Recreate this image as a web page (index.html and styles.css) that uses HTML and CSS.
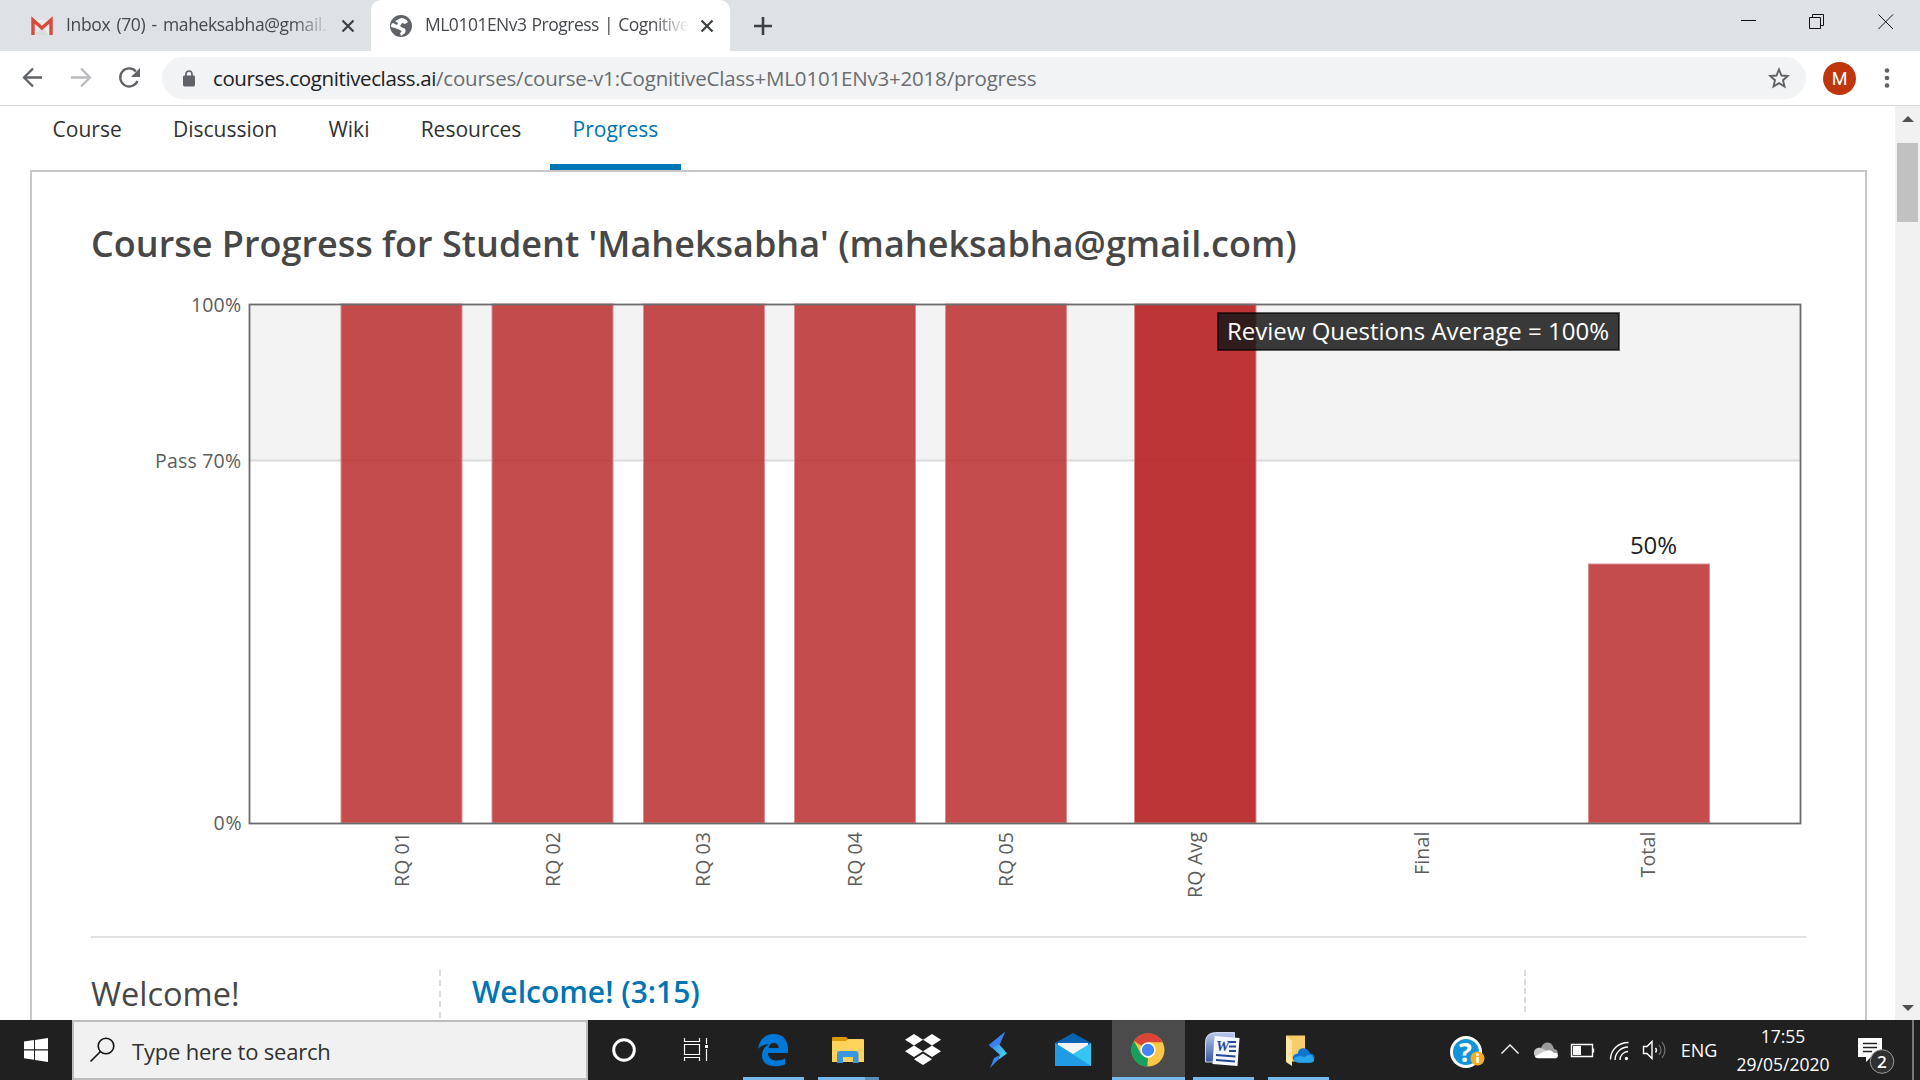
FILE: index.html
```html
<!DOCTYPE html>
<html lang="en">
<head>
<meta charset="utf-8">
<title>ML0101ENv3 Progress | Cognitive Class</title>
<link rel="stylesheet" href="styles.css">
</head>
<body>
<div class="screen">
  <header class="tabstrip">
    <div class="tab tab-first">
      <svg class="favicon" viewBox="30 14 24 22"><path d="M33 19h18v15H33z" fill="#ececec"/><path d="M35 34l7-8 7 8z" fill="#dcdcdc"/><path d="M33 34V19l9 8 9-8v15" fill="none" stroke="#d84a3c" stroke-width="3.4"/></svg>
      <span class="tab-title title-inbox">Inbox (70) - maheksabha@gmail.</span>
      <svg class="tab-close" viewBox="0 0 14 14"><path d="M1.5 1.5l11 11M12.5 1.5l-11 11"/></svg>
    </div>
    <div class="tab tab-active">
      <svg class="favicon" viewBox="389 14 24 22"><circle cx="401" cy="25" r="11" fill="#5f6368"/><path d="M401 17c3 0 5 1 7 4l-3 2-3-1-2 3 3 2c3 0 3 3 2 5l-4 3-1-3c2-1 2-2 0-3l-5-2-4-1c0-3 1-4 2-4l4 2 1-2-3-2z" fill="#fff"/></svg>
      <span class="tab-title title-progress">ML0101ENv3 Progress | Cognitive</span>
      <svg class="tab-close" viewBox="0 0 14 14"><path d="M1.5 1.5l11 11M12.5 1.5l-11 11"/></svg>
    </div>
    <svg class="new-tab" viewBox="0 0 20 20"><path d="M10 1v18M1 10h18"/></svg>
    <svg class="window-controls" viewBox="1720 0 200 51"><path d="M1741 20.5h15M1809.5 17.5h11v11h-11zM1812.500 17.500v-3h11v11h-3M1878.500 14.500l14.500 14.500M1893 14.500l-14.500 14.500"/></svg>
  </header>

  <div class="toolbar">
    <svg class="nav-buttons" viewBox="0 51 162 54">
      <path d="M42 77.500H24.500M33 68.500l-9 9 9 9" stroke="#5f6368"/>
      <path d="M71 77.500h17.500M81 68.500l9 9-9 9" stroke="#b9bbbe"/>
      <path d="M137.500 81a9 9 0 1 1-1.600-9.600" stroke="#5f6368"/><path d="M140 68v9h-9z" fill="#5f6368"/>
    </svg>
    <div class="omnibox">
      <svg class="lock" viewBox="0 0 12 17"><rect y="5.500" width="12" height="11" rx="1.400" fill="#5f6368"/><path d="M3 6V4a3 3 0 0 1 6 0v2" fill="none" stroke="#5f6368" stroke-width="1.700"/></svg>
      <span class="url"><span class="host">courses.cognitiveclass.ai</span>/courses/course-v1:CognitiveClass+ML0101ENv3+2018/progress</span>
      <svg class="star" viewBox="0 0 22 22"><path d="M11 2.500l2.500 6 6.300.5-4.800 4.200 1.500 6.300-5.500-3.400-5.500 3.400L7 13.200 2.200 9l6.300-.5z"/></svg>
    </div>
    <div class="avatar">M</div>
    <svg class="menu" viewBox="0 0 6 20"><circle cx="3" cy="2.500" r="2.300"/><circle cx="3" cy="10" r="2.300"/><circle cx="3" cy="17.500" r="2.300"/></svg>
  </div>

  <div class="viewport">
    <main class="page">
      <nav class="course-nav">
        <a>Course</a><a>Discussion</a><a>Wiki</a><a>Resources</a><a class="current">Progress</a>
      </nav>
      <section class="panel">
        <h1>Course Progress for Student 'Maheksabha' (maheksabha@gmail.com)</h1>
        <svg class="chart" viewBox="91 280 1716 656">
          <rect x="250" y="304" width="1550" height="156" fill="#f3f3f3"/>
          <path d="M250 460.500h1550" stroke="#dadada" stroke-width="2"/>
          <g class="bars">
            <rect x="341" y="304" width="121" height="519"/>
            <rect x="492" y="304" width="121" height="519"/>
            <rect x="643.500" y="304" width="121" height="519"/>
            <rect x="794.500" y="304" width="121" height="519"/>
            <rect x="945.500" y="304" width="121" height="519"/>
            <rect class="hovered" x="1134.500" y="304" width="121.500" height="519"/>
            <rect x="1588.500" y="564" width="121" height="259"/>
          </g>
          <rect x="249.500" y="304.500" width="1551" height="519" fill="none" stroke="#6b6b6b" stroke-width="1.800"/>
          <g class="ticks">
            <text x="191" y="312" textLength="50">100%</text>
            <text x="155" y="468" textLength="86">Pass 70%</text>
            <text x="213.500" y="830" textLength="28">0%</text>
            <text transform="translate(409 887) rotate(-90)" textLength="55">RQ 01</text>
            <text transform="translate(560 887) rotate(-90)" textLength="55">RQ 02</text>
            <text transform="translate(710 887) rotate(-90)" textLength="55">RQ 03</text>
            <text transform="translate(862 887) rotate(-90)" textLength="55">RQ 04</text>
            <text transform="translate(1013 887) rotate(-90)" textLength="55">RQ 05</text>
            <text transform="translate(1202 898) rotate(-90)" textLength="66">RQ Avg</text>
            <text transform="translate(1429 875) rotate(-90)" textLength="43.500">Final</text>
            <text transform="translate(1655 877.500) rotate(-90)" textLength="46">Total</text>
          </g>
          <text class="value" x="1630" y="554" textLength="47">50%</text>
          <rect x="1218" y="313" width="401" height="37" fill="#171717" fill-opacity=".85" stroke="#000" stroke-opacity=".6" stroke-width="2"/>
          <text class="tip" x="1227" y="340" textLength="382">Review Questions Average = 100%</text>
        </svg>
        <div class="chapter">
          <h2>Welcome!</h2>
          <div class="divider tall"></div>
          <h3>Welcome! (3:15)</h3>
          <div class="divider"></div>
        </div>
      </section>
    </main>
    <aside class="scrollbar">
      <svg class="arrow" viewBox="0 0 12 6"><path d="M0 6l6-6 6 6z"/></svg>
      <div class="thumb"></div>
      <svg class="arrow last" viewBox="0 0 12 6"><path d="M0 0l6 6 6-6z"/></svg>
    </aside>
  </div>

  <footer class="taskbar">
    <svg class="start" viewBox="0 1020 72 60"><path d="M24 1041.500l10-1.400v9.200H24zM35 1040l13-2v11.300H35zM24 1050.400h10v9.300l-10-1.500zM35 1050.400h13v11.600l-13-2z" fill="#fff"/></svg>
    <div class="search">
      <svg viewBox="0 0 26 26"><circle cx="17" cy="9" r="7.800"/><path d="M11.500 14.500L1.500 24.500"/></svg>
      <span>Type here to search</span>
    </div>
    <svg class="system" viewBox="588 1020 72 60"><circle cx="624" cy="1050" r="10.300" fill="none" stroke="#fff" stroke-width="3"/></svg>
    <svg class="system" viewBox="660 1020 72 60"><path d="M684.500 1038v3.500h15V1038M684.500 1061v-3.500h15v3.500M684.500 1044.500h15v10h-15zM706.500 1038v6M706.500 1049v12" fill="none" stroke="#fff" stroke-width="1.200"/><path d="M705 1045h3v3h-3z" fill="#fff"/></svg>
    <div class="apps">
      <svg viewBox="736 1020 75 60"><path d="M758 1049c1-9 7-15 15.500-15 9 0 14.500 6 14.500 15v4h-20c0 5 4 7.500 9 7.500 3.500 0 6-1 8-2v6c-3 1.200-6 1.800-10 1.800-8 0-13-4-13-11 0-5 3-9 7-11-5 0-9 2-11 4.700zM768.500 1048h10c0-3-1.500-5-4.500-5-3 0-5 2-5.500 5z" fill="#0078d7"/><path d="M743 1077h61v3h-61z" fill="#76b9ed"/></svg>
      <svg viewBox="811 1020 75 60"><path d="M832 1038q0-1 1-1h13l2 2-2 3h-14z" fill="#dc9900"/><path d="M832 1041h14l2-2h15q1 0 1 1v22h-32z" fill="#ffd35b"/><path d="M837 1063v-9q0-3 3-3h15.500q3 0 3 3v9H853v-6h-10v6z" fill="#3a96dd"/><path d="M818 1077h47v3h-47z" fill="#76b9ed"/><path d="M865 1077h14v3h-14z" fill="#5a8db8"/></svg>
      <svg viewBox="886 1020 75 60"><path d="M914 1034l9 5.700-9 5.700-9-5.700zM932 1034l9 5.700-9 5.700-9-5.700zM914 1045.600l9 5.700-9 5.700-9-5.700zM932 1045.600l9 5.700-9 5.700-9-5.700zM923 1053.600l9 5.700-9 5.700-9-5.700z" fill="#fff"/></svg>
      <svg viewBox="961 1020 75 60"><defs><linearGradient id="flash" x2="1" y2="1"><stop stop-color="#3f6bea"/><stop offset="1" stop-color="#43e2ec"/></linearGradient></defs><path d="M1005 1032l-16 13 11 10-2 5 9-6.500-8-9.500z" fill="url(#flash)"/><path d="M1005 1032l-16 13 3 3 8-4zM990 1068l8-8 2-5-6 3z" fill="#3b82ed"/></svg>
      <svg viewBox="1036 1020 75 60"><path d="M1055 1043l18-10 18 10v10h-36z" fill="#0864b3"/><path d="M1058 1043h30v8l-15 9-15-9z" fill="#f4f4f4"/><path d="M1055 1043l18 11 18-11v23h-36z" fill="#36c5f3"/><path d="M1055 1043l36 23h-36z" fill="#229be5"/></svg>
      <svg viewBox="1111 1020 75 60"><path d="M1112 1020h73v60h-73z" fill="#4b4b4b"/><circle cx="1148" cy="1050" r="16.500" fill="#fbc645"/><path d="M1148 1050l-14-9a16.500 16.500 0 0 1 28.700 1.200H1148z" fill="#db4437"/><path d="M1134 1041l7 13 7 4.500-.5 8a16.500 16.500 0 0 1-13.500-25.500z" fill="#16a05d"/><path d="M1148 1066.500l7-13-7-3-3 7z" fill="#fbc645"/><path d="M1141 1054l7 4.500-1 8z" fill="#16a05d"/><circle cx="1148" cy="1050" r="6.900" fill="#4285f4" stroke="#fff" stroke-width="1.500"/><path d="M1112 1077h73v3h-73z" fill="#76b9ed"/></svg>
      <svg viewBox="1186 1020 75 60"><defs><linearGradient id="doc" y2="1" x2="0"><stop stop-color="#bccbed"/><stop offset="1" stop-color="#3556a2"/></linearGradient></defs><path d="M1205.500 1062v-20q0-9 10-9.500h19v29.500z" fill="url(#doc)" stroke="#cfd8ee"/><path d="M1214.500 1036l25 2-2 28-25-2z" fill="#f6f8ff"/><text x="1216" y="1051" class="word-letter">W</text><path d="M1229 1042h7M1229 1046.500h7M1229 1051h7M1216 1055l19.500 1.500M1216 1060l19 1.500" stroke="#24479a" stroke-width="2"/><path d="M1193 1077h61v3h-61z" fill="#76b9ed"/></svg>
      <svg viewBox="1261 1020 75 60"><path d="M1286 1035.500h19v26h-19z" fill="#f6cd6a"/><path d="M1286 1036l6 5v25l-6-4z" fill="#ffe7a3"/><path d="M1299 1062.500c-8 0-8-9-1-9 0-7 10-7 12 0 6-1 6 9 0 9z" fill="#0d74cf"/><path d="M1299 1062.800c-5 0-6.500-5-2-6 4-2 7 1 8 0 5-4 8-1 8 1 2 2 1 5-3 5z" fill="#29a5ee"/><path d="M1268 1077h61v3h-61z" fill="#76b9ed"/></svg>
    </div>
    <div class="tray">
      <svg viewBox="1449 1020 36 60" class="slot help"><circle cx="1466" cy="1052" r="14.500" fill="#1294db" stroke="#fff" stroke-width="3"/><text x="1459" y="1062" class="question">?</text><circle cx="1477.500" cy="1058.500" r="7" fill="#f4ad1d"/><path d="M1476.200 1057h2.600v6h-2.600zM1476.200 1053.300h2.600v2.500h-2.600z" fill="#fff"/></svg>
      <svg viewBox="1492 1020 36 60" class="slot"><path d="M1501.500 1053.500l8.500-8.500 8.500 8.500" class="line"/></svg>
      <svg viewBox="1528 1020 36 60" class="slot"><path d="M1534 1054c0-5 5-7 7-6 2-7 11-8 13 1 3 0 4 3 4 5l-10 3z" fill="#9b9b9b"/><path d="M1536 1057c-3-2-3-8 2-9 5-1 9 4 12 5l-5 4z" fill="#c9c9c9"/><path d="M1538 1058.300c-2 0-3-1-3-2 5-2 9-6 14-6 3 0 4 2 5 3 3-1 4 1 4 2.500 0 2-2 2.500-3 2.500z" fill="#fff"/></svg>
      <svg viewBox="1564 1020 36 60" class="slot"><path d="M1571.500 1044.500h21v12h-21zM1593.500 1048.500v4" class="line"/><path d="M1573 1046h8v9h-8z" fill="#fff"/></svg>
      <svg viewBox="1600 1020 36 60" class="slot"><path d="M1610.500 1059.500c0-10 8-17 18-17M1615 1060c0-7 6-13 13-13M1620 1060c0-5 4-8.500 8-8.500" class="line"/><circle cx="1626.500" cy="1058.500" r="1.700" fill="#fff"/></svg>
      <svg viewBox="1636 1020 36 60" class="slot"><path d="M1643.500 1046.500h3.500l5-5v17l-5-5h-3.500zM1655.500 1048q2 2 0 4.500" class="line"/><path d="M1659 1045q4 5 0 10M1662 1042q6 8 0 16" fill="none" stroke="#777" stroke-width="1.200"/></svg>
      <span class="lang">ENG</span>
      <div class="clock"><span class="time">17:55</span><span class="date">29/05/2020</span></div>
      <svg viewBox="1840 1020 72 60" class="notice"><path d="M1858 1038h24v19h-11l-5 5v-5h-8z" fill="#fff"/><path d="M1863 1043.500h14M1863 1047.500h14M1863 1051.500h9" stroke="#222" stroke-width="1.300"/><circle cx="1882" cy="1061.500" r="11.800" fill="#303030" stroke="#9b9b9b"/><text x="1877" y="1068" class="count">2</text></svg>
    </div>
    <div class="show-desktop"></div>
  </footer>
</div>
</body>
</html>
```

FILE: styles.css
```css
* { box-sizing: border-box; }
body { margin: 0; background: #fff; font-family: "Open Sans", "Noto Sans", sans-serif; }
svg { display: block; flex: none; }
.screen { width: 1920px; height: 1080px; display: flex; flex-direction: column; overflow: hidden; }

.tabstrip { height: 51px; flex: none; display: flex; align-items: center; background: #dee1e6; }
.tab { height: 51px; display: flex; align-items: center; white-space: nowrap; }
.tab-first { width: 371px; padding-left: 30px; background: #dee1e6; }
.tab-active { width: 359px; padding-left: 18px; background: #fff; border-radius: 10px 10px 0 0; }
.favicon { width: 24px; height: 22px; }
.tab-title { width: 264px; margin-left: 12px; font-size: 17.5px; line-height: 24px; color: #45484c; margin-top: -3px; -webkit-mask-image: linear-gradient(90deg, #000 86%, transparent 100%); mask-image: linear-gradient(90deg, #000 86%, transparent 100%); }
.title-inbox { letter-spacing: -0.36px; word-spacing: 2px; }
.title-progress { letter-spacing: -0.5px; word-spacing: 1px; }
.tab-close { width: 14px; height: 14px; margin-left: 11px; stroke: #3c4043; stroke-width: 2.2; }
.new-tab { width: 20px; height: 20px; margin-left: 23px; stroke: #3c4043; stroke-width: 2.6; }
.window-controls { width: 200px; height: 51px; margin-left: auto; fill: none; stroke: #111; stroke-width: 1; }

.toolbar { height: 55px; flex: none; display: flex; align-items: center; border-bottom: 1px solid #d5d7d9; background: #fff; }
.nav-buttons { width: 162px; height: 54px; fill: none; stroke-width: 2.3; }
.omnibox { width: 1644px; height: 42px; border-radius: 21px; display: flex; align-items: center; background: #f1f3f4; padding: 0 16px 0 21px; }
.lock { width: 12px; height: 17px; }
.url { margin-left: 18px; font-size: 20.5px; letter-spacing: -0.19px; color: #6a6d70; white-space: nowrap; }
.host { color: #202124; letter-spacing: -0.39px; }
.star { width: 22px; height: 22px; margin-left: auto; fill: none; stroke: #5f6368; stroke-width: 1.9; }
.avatar { width: 33px; height: 33px; margin-left: 17px; border-radius: 50%; background: #bf360c; color: #fff; font: 18px/33px Roboto, sans-serif; text-align: center; }
.menu { width: 6px; height: 20px; margin-left: 28px; fill: #5f6368; }

.viewport { flex: 1; display: flex; min-height: 0; overflow: hidden; }
.page { width: 1895px; overflow: hidden; }
.course-nav { height: 64px; display: flex; gap: 5.2px; padding-left: 29.6px; }
.course-nav a { height: 64px; padding: 8px 23px 0; font-size: 21px; line-height: 30px; color: #313131; text-align: center; }
.course-nav .current { color: #0075b4; border-bottom: 6px solid #0075b4; }
.panel { width: 1837px; height: 900px; margin-left: 30px; padding: 0 59px; border: 2px solid #c8c8c8; }
h1 { margin: 0; height: 108px; padding-top: 48px; font-size: 36px; line-height: 48px; font-weight: 600; color: #474747; white-space: nowrap; }
.chart { width: 1716px; height: 656px; }
.bars rect { fill: #bc2f2f; fill-opacity: .86; stroke: #dd8d8d; stroke-width: 1; }
.bars .hovered { fill: #b92828; fill-opacity: .94; }
.ticks { font-size: 19.5px; fill: #5c5c5c; }
.value { font-size: 24px; fill: #222; }
.tip { font-size: 24px; fill: #fff; }
.chapter { height: 84px; border-top: 2px solid #e2e2e2; width: 1715px; padding-top: 32px; display: flex; }
h2, h3 { margin: 0; white-space: nowrap; }
h2 { width: 348px; font-size: 32.5px; line-height: 48px; font-weight: 400; color: #474747; }
h3 { width: 1083px; padding-left: 31px; font-size: 30px; line-height: 44px; font-weight: 600; color: #0075b4; }
.divider { width: 2px; height: 42px; background: repeating-linear-gradient(#dcdcdc 0 6px, transparent 6px 9px); }
.divider.tall { height: 48px; background: repeating-linear-gradient(#dcdcdc 0 6px, transparent 6px 10.4px); }

.scrollbar { width: 25px; background: #f1f1f1; display: flex; flex-direction: column; align-items: center; padding: 10px 0 9px; }
.arrow { width: 12px; height: 6px; fill: #505050; }
.thumb { width: 21px; height: 79px; margin-top: 21px; background: #c1c1c1; }
.last { margin-top: auto; }

.taskbar { height: 60px; flex: none; display: flex; background: #202020; color: #fff; }
.start, .system { width: 72px; height: 60px; }
.search { width: 516px; height: 60px; border: 2px solid #bdbdbd; background: #f1f1f1; display: flex; align-items: center; padding-left: 15px; color: #303030; font-size: 22px; letter-spacing: -0.2px; }
.search svg { width: 26px; height: 26px; fill: none; stroke: #111; stroke-width: 1.6; }
.search span { margin-left: 17px; padding-top: 2px; white-space: nowrap; }
.apps { display: flex; margin-left: 4px; }
.apps svg { width: 75px; height: 60px; }
.word-letter { font: italic bold 15px "Liberation Serif", serif; fill: #24479a; }
.tray { margin-left: auto; display: flex; align-items: center; }
.slot { width: 36px; height: 60px; overflow: visible; }
.help { margin-right: 7px; }
.question { font: bold 27px "Open Sans", sans-serif; fill: #fff; }
.line { fill: none; stroke: #fff; stroke-width: 1.4; }
.lang { width: 54px; text-align: center; font-size: 18px; }
.clock { width: 114px; display: flex; flex-direction: column; align-items: center; font-size: 17.5px; line-height: 28px; }
.notice { width: 72px; height: 60px; }
.count { font: 600 17px "Open Sans", sans-serif; fill: #fff; }
.show-desktop { width: 8px; border-left: 2px solid #777; }
```
